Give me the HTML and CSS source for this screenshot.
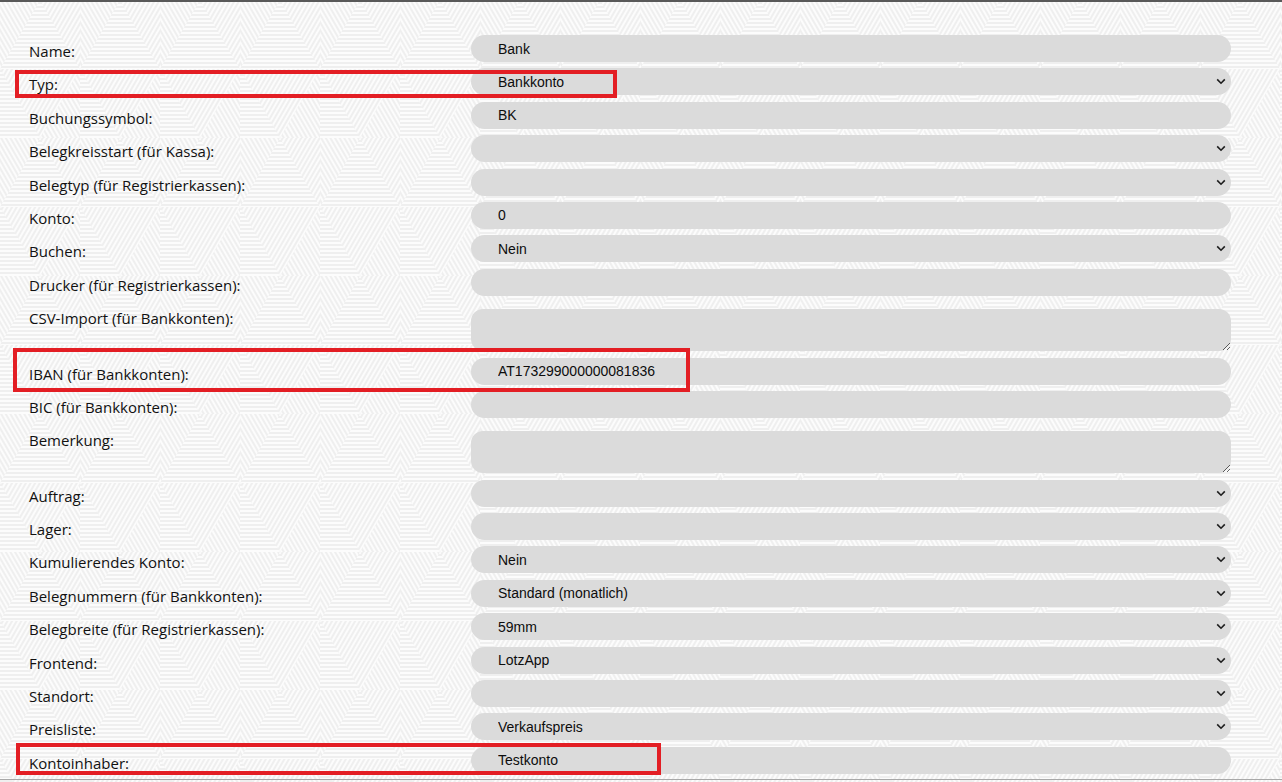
FILE: index.html
```html
<!DOCTYPE html>
<html lang="de">
<head>
<meta charset="utf-8">
<title>Konto</title>
<link rel="stylesheet" href="styles.css">
</head>
<body>
<svg class="bg" width="1282" height="782" aria-hidden="true">
  <defs>
    <pattern id="s0" width="4" height="4" patternUnits="userSpaceOnUse"><rect width="4" height="2" fill="#ffffff"/></pattern>
    <pattern id="s60" width="4" height="4" patternUnits="userSpaceOnUse" patternTransform="rotate(60)"><rect width="4" height="2" fill="#ffffff"/></pattern>
    <pattern id="s120" width="4" height="4" patternUnits="userSpaceOnUse" patternTransform="rotate(120)"><rect width="4" height="2" fill="#ffffff"/></pattern>
    <pattern id="tile" width="80" height="138" patternUnits="userSpaceOnUse">
      <polygon points="0,69 40,0 80,69" fill="url(#s0)"/>
      <polygon points="0,0 40,0 0,69" fill="url(#s60)"/>
      <polygon points="40,0 80,0 80,69" fill="url(#s120)"/>
      <polygon points="0,69 80,69 40,138" fill="url(#s120)"/>
      <polygon points="0,69 40,138 0,138" fill="url(#s0)"/>
      <polygon points="80,69 80,138 40,138" fill="url(#s60)"/>
    </pattern>
  </defs>
  <rect width="1282" height="782" fill="#efefef"/>
  <rect width="1282" height="782" fill="url(#tile)" opacity="0.8"/>
</svg>

<div class="frame">
  <form class="form">
    <label class="lbl">Name:</label>
    <div class="field"><input class="ctl" type="text" value="Bank"></div>

    <label class="lbl">Typ:</label>
    <div class="field sel"><select class="ctl"><option>Bankkonto</option></select><svg class="chev" width="10" height="7" viewBox="0 0 10 7"><path d="M1.2 1.4 5 5.2 8.8 1.4"/></svg></div>

    <label class="lbl">Buchungssymbol:</label>
    <div class="field"><input class="ctl" type="text" value="BK"></div>

    <label class="lbl">Belegkreisstart (für Kassa):</label>
    <div class="field sel"><select class="ctl"><option></option></select><svg class="chev" width="10" height="7" viewBox="0 0 10 7"><path d="M1.2 1.4 5 5.2 8.8 1.4"/></svg></div>

    <label class="lbl">Belegtyp (für Registrierkassen):</label>
    <div class="field sel"><select class="ctl"><option></option></select><svg class="chev" width="10" height="7" viewBox="0 0 10 7"><path d="M1.2 1.4 5 5.2 8.8 1.4"/></svg></div>

    <label class="lbl">Konto:</label>
    <div class="field"><input class="ctl" type="text" value="0"></div>

    <label class="lbl">Buchen:</label>
    <div class="field sel"><select class="ctl"><option>Nein</option></select><svg class="chev" width="10" height="7" viewBox="0 0 10 7"><path d="M1.2 1.4 5 5.2 8.8 1.4"/></svg></div>

    <label class="lbl">Drucker (für Registrierkassen):</label>
    <div class="field"><input class="ctl" type="text" value=""></div>

    <label class="lbl">CSV-Import (für Bankkonten):</label>
    <div class="field ta"><textarea class="ctl area"></textarea></div>

    <label class="lbl">IBAN (für Bankkonten):</label>
    <div class="field"><input class="ctl" type="text" value="AT173299000000081836"></div>

    <label class="lbl">BIC (für Bankkonten):</label>
    <div class="field"><input class="ctl" type="text" value=""></div>

    <label class="lbl">Bemerkung:</label>
    <div class="field ta"><textarea class="ctl area"></textarea></div>

    <label class="lbl">Auftrag:</label>
    <div class="field sel"><select class="ctl"><option></option></select><svg class="chev" width="10" height="7" viewBox="0 0 10 7"><path d="M1.2 1.4 5 5.2 8.8 1.4"/></svg></div>

    <label class="lbl">Lager:</label>
    <div class="field sel"><select class="ctl"><option></option></select><svg class="chev" width="10" height="7" viewBox="0 0 10 7"><path d="M1.2 1.4 5 5.2 8.8 1.4"/></svg></div>

    <label class="lbl">Kumulierendes Konto:</label>
    <div class="field sel"><select class="ctl"><option>Nein</option></select><svg class="chev" width="10" height="7" viewBox="0 0 10 7"><path d="M1.2 1.4 5 5.2 8.8 1.4"/></svg></div>

    <label class="lbl">Belegnummern (für Bankkonten):</label>
    <div class="field sel"><select class="ctl"><option>Standard (monatlich)</option></select><svg class="chev" width="10" height="7" viewBox="0 0 10 7"><path d="M1.2 1.4 5 5.2 8.8 1.4"/></svg></div>

    <label class="lbl">Belegbreite (für Registrierkassen):</label>
    <div class="field sel"><select class="ctl"><option>59mm</option></select><svg class="chev" width="10" height="7" viewBox="0 0 10 7"><path d="M1.2 1.4 5 5.2 8.8 1.4"/></svg></div>

    <label class="lbl">Frontend:</label>
    <div class="field sel"><select class="ctl"><option>LotzApp</option></select><svg class="chev" width="10" height="7" viewBox="0 0 10 7"><path d="M1.2 1.4 5 5.2 8.8 1.4"/></svg></div>

    <label class="lbl">Standort:</label>
    <div class="field sel"><select class="ctl"><option></option></select><svg class="chev" width="10" height="7" viewBox="0 0 10 7"><path d="M1.2 1.4 5 5.2 8.8 1.4"/></svg></div>

    <label class="lbl">Preisliste:</label>
    <div class="field sel"><select class="ctl"><option>Verkaufspreis</option></select><svg class="chev" width="10" height="7" viewBox="0 0 10 7"><path d="M1.2 1.4 5 5.2 8.8 1.4"/></svg></div>

    <label class="lbl">Kontoinhaber:</label>
    <div class="field"><input class="ctl" type="text" value="Testkonto"></div>
  </form>
</div>

<div class="mark mark-typ"></div>
<div class="mark mark-iban"></div>
<div class="mark mark-inhaber"></div>
</body>
</html>
```

FILE: styles.css
```css
html, body {
  margin: 0;
  padding: 0;
  width: 1282px;
  height: 782px;
  overflow: hidden;
}

body {
  position: relative;
  font-family: "Open Sans", "Noto Sans", sans-serif;
  color: #111;
}

.bg {
  position: absolute;
  left: 0;
  top: 0;
  z-index: -1;
}

.frame {
  box-sizing: border-box;
  height: 780px;
  border-top: 2px solid #595959;
  border-bottom: 1px solid #a8a8a8;
}

.form {
  display: grid;
  grid-template-columns: 442px 760px;
  row-gap: 6.4px;
  padding: 33px 0 0 29px;
  margin: 0;
}

.lbl {
  font-size: 15px;
  line-height: 20px;
  padding-top: 6px;
  color: #111;
  white-space: nowrap;
}

.field {
  position: relative;
  height: 27px;
}

.field.ta {
  height: 42px;
  margin-top: 7px;
}

.ctl {
  box-sizing: border-box;
  display: block;
  width: 760px;
  height: 27px;
  margin: 0;
  border: none;
  outline: none;
  border-radius: 13.5px;
  background: #dbdbdb;
  padding: 0 30px 0 27px;
  font-family: "Liberation Sans", Arial, sans-serif;
  font-size: 14px;
  color: #0d0d0d;
}

select.ctl {
  appearance: none;
  -webkit-appearance: none;
}

.area {
  height: 42px;
  border-radius: 12px;
  resize: vertical;
  padding: 4px 27px;
}

.chev {
  position: absolute;
  right: 5px;
  top: 10px;
  pointer-events: none;
}

.chev path {
  fill: none;
  stroke: #1e1e1e;
  stroke-width: 1.6;
}

.mark {
  position: absolute;
  box-sizing: border-box;
  border: 4px solid #e31e24;
}

.mark-typ {
  left: 15px;
  top: 70px;
  width: 602px;
  height: 28px;
}

.mark-iban {
  left: 13px;
  top: 348px;
  width: 677px;
  height: 44px;
}

.mark-inhaber {
  left: 16px;
  top: 743px;
  width: 645px;
  height: 32px;
}
```
